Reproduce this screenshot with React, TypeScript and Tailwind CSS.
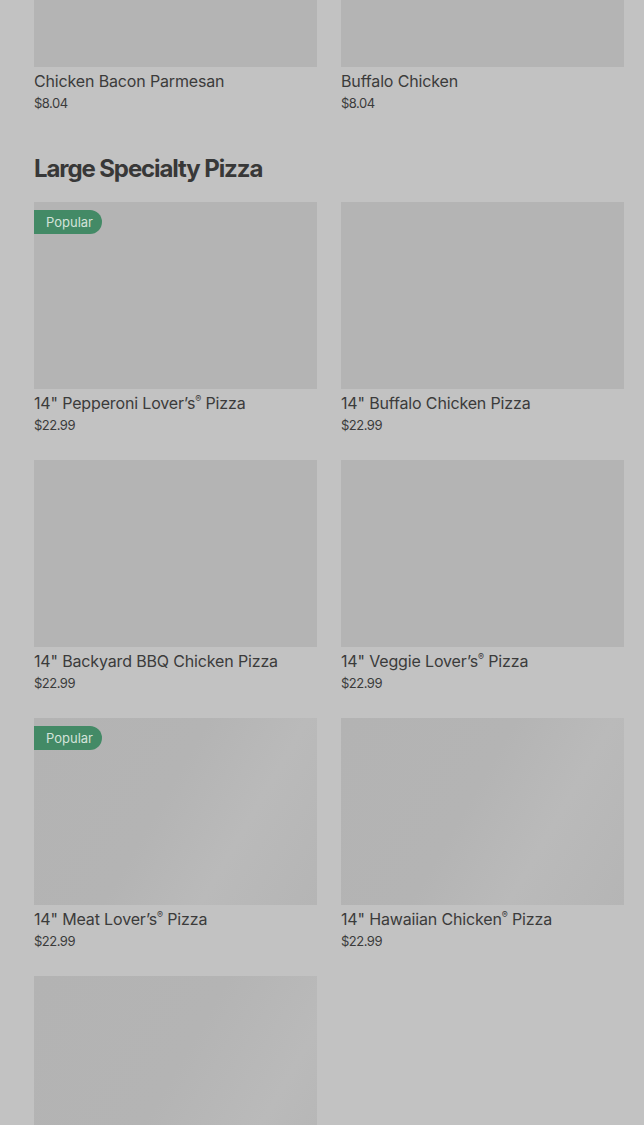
import React from "react";

type Item = { name: string; reg?: boolean; tail?: string; price: string; popular?: boolean; shimmer?: boolean };

const rows: Item[] = [
  { name: "14\" Pepperoni Lover\u2019s", reg: true, tail: " Pizza", price: "$22.99", popular: true },
  { name: "14\" Buffalo Chicken Pizza", price: "$22.99" },
  { name: "14\" Backyard BBQ Chicken Pizza", price: "$22.99" },
  { name: "14\" Veggie Lover\u2019s", reg: true, tail: " Pizza", price: "$22.99" },
  { name: "14\" Meat Lover\u2019s", reg: true, tail: " Pizza", price: "$22.99", popular: true, shimmer: true },
  { name: "14\" Hawaiian Chicken", reg: true, tail: " Pizza", price: "$22.99", shimmer: true },
];

function Card({ item, h = "h-[187px]" }: { item: Item; h?: string }) {
  return (
    <div className="flex flex-col">
      <div
        className={`relative ${h} w-full ${
          item.shimmer
            ? "bg-[linear-gradient(120deg,#b3b3b3_0%,#b4b4b4_45%,#bababa_70%,#b5b5b5_100%)]"
            : "bg-[#b4b4b4]"
        }`}
      >
        {item.popular && (
          <span className="absolute left-0 top-[8px] flex h-[24px] w-[68px] items-center rounded-r-full bg-[#438a66] pl-[12px] text-[13px] leading-none text-[#d3e3da]">
            Popular
          </span>
        )}
      </div>
      <div className="mt-[2px] text-[16px] leading-[24px] tracking-[-0.15px] text-[#3b3b3b]">
        {item.name}
        {item.reg && <sup className="relative top-[-1px] text-[9px] align-super">{"\u00ae"}</sup>}
        {item.tail}
      </div>
      <div className="text-[13px] leading-[20px] tracking-[-0.5px] text-[#3b3b3b]">{item.price}</div>
    </div>
  );
}

export default function App() {
  return (
    <div
      className="min-h-[1125px] w-full overflow-hidden bg-[#c2c2c2] pl-[34px] pr-[20px]"
      style={{ fontFamily: "Inter, 'Noto Sans', sans-serif" }}
    >
      <div className="grid grid-cols-2 gap-x-[24px]">
        <Card item={{ name: "Chicken Bacon Parmesan", price: "$8.04" }} h="h-[67px]" />
        <Card item={{ name: "Buffalo Chicken", price: "$8.04" }} h="h-[67px]" />
      </div>
      <h2 className="mt-[40px] mb-[17px] text-[24px] font-bold leading-[32px] tracking-[-1.1px] text-[#383838]">
        Large Specialty Pizza
      </h2>
      <div className="grid grid-cols-2 gap-x-[24px] gap-y-[25px]">
        {rows.map((it, i) => (
          <Card key={i} item={it} />
        ))}
        <div className="flex flex-col">
          <div className="h-[187px] w-full bg-[linear-gradient(120deg,#b3b3b3_0%,#b4b4b4_50%,#bababa_80%,#b6b6b6_100%)]" />
        </div>
      </div>
    </div>
  );
}
